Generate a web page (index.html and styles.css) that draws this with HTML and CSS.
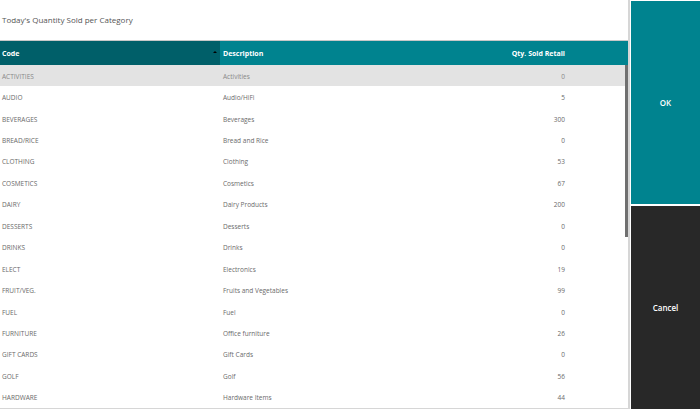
FILE: index.html
```html
<!DOCTYPE html>
<html>
<head>
<meta charset="utf-8">
<link rel="stylesheet" href="styles.css">
</head>
<body>
<div class="app">
  <div class="main">
    <div class="title">Today's Quantity Sold per Category</div>
    <div class="grid">
      <div class="head">
        <div class="c code">Code<span class="sort"></span></div>
        <div class="c desc">Description</div>
        <div class="c qty">Qty. Sold Retail</div>
      </div>
      <div class="body">
        <div class="row sel"><div class="c code">ACTIVITIES</div><div class="c desc">Activities</div><div class="c qty">0</div></div>
        <div class="row"><div class="c code">AUDIO</div><div class="c desc">Audio/HiFi</div><div class="c qty">5</div></div>
        <div class="row"><div class="c code">BEVERAGES</div><div class="c desc">Beverages</div><div class="c qty">300</div></div>
        <div class="row"><div class="c code">BREAD/RICE</div><div class="c desc">Bread and Rice</div><div class="c qty">0</div></div>
        <div class="row"><div class="c code">CLOTHING</div><div class="c desc">Clothing</div><div class="c qty">53</div></div>
        <div class="row"><div class="c code">COSMETICS</div><div class="c desc">Cosmetics</div><div class="c qty">67</div></div>
        <div class="row"><div class="c code">DAIRY</div><div class="c desc">Dairy Products</div><div class="c qty">200</div></div>
        <div class="row"><div class="c code">DESSERTS</div><div class="c desc">Desserts</div><div class="c qty">0</div></div>
        <div class="row"><div class="c code">DRINKS</div><div class="c desc">Drinks</div><div class="c qty">0</div></div>
        <div class="row"><div class="c code">ELECT</div><div class="c desc">Electronics</div><div class="c qty">19</div></div>
        <div class="row"><div class="c code">FRUIT/VEG.</div><div class="c desc">Fruits and Vegetables</div><div class="c qty">99</div></div>
        <div class="row"><div class="c code">FUEL</div><div class="c desc">Fuel</div><div class="c qty">0</div></div>
        <div class="row"><div class="c code">FURNITURE</div><div class="c desc">Office furniture</div><div class="c qty">26</div></div>
        <div class="row"><div class="c code">GIFT CARDS</div><div class="c desc">Gift Cards</div><div class="c qty">0</div></div>
        <div class="row"><div class="c code">GOLF</div><div class="c desc">Golf</div><div class="c qty">56</div></div>
        <div class="row"><div class="c code">HARDWARE</div><div class="c desc">Hardware Items</div><div class="c qty">44</div></div>
        <div class="scroll"></div>
      </div>
    </div>
  </div>
  <div class="side">
    <div class="btn ok">OK</div>
    <div class="btn cancel">Cancel</div>
  </div>
</div>
</body>
</html>
```
FILE: styles.css
```css
html, body {
  margin: 0;
  padding: 0;
  background: #fff;
}
body {
  font-family: "Open Sans", "Noto Sans", sans-serif;
  color: #666;
}
.app {
  display: flex;
  width: 700px;
  height: 409px;
  overflow: hidden;
}
.main {
  border-right: 2px solid #d6d6d6;
  border-bottom: 1px solid #d6d6d6;
  box-sizing: border-box;
  width: 630px;
  display: flex;
  flex-direction: column;
}
.title {
  height: 40px;
  box-sizing: border-box;
  padding: 14px 0 0 2px;
  font-size: 8px;
  color: #555;
}
.grid {
  border-top: 1px solid #c8c8c8;
  flex: 1;
  display: flex;
  flex-direction: column;
}
.head {
  display: flex;
  height: 24px;
  background: #00838f;
  color: #fff;
  font-weight: bold;
  font-size: 7px;
}
.head .c {
  display: flex;
  align-items: center;
}
.head .code {
  background: #005f69;
  position: relative;
}
.sort {
  position: absolute;
  right: 3px;
  top: 10px;
  width: 0;
  height: 0;
  border-left: 2px solid transparent;
  border-right: 2px solid transparent;
  border-bottom: 2px solid #000;
}
.c {
  box-sizing: border-box;
}
.code {
  width: 220px;
  padding-left: 2px;
}
.desc {
  width: 250px;
  padding-left: 3px;
}
.qty {
  width: 95px;
  justify-content: flex-end;
  text-align: right;
}
.body {
  position: relative;
  flex: 1;
}
.row {
  display: flex;
  align-items: center;
  height: 21.45px;
  padding-top: 1px;
  box-sizing: border-box;
  font-size: 6.5px;
  color: #6a6a6a;
}
.row.sel {
  background: #e3e3e3;
  color: #888;
}
.scroll {
  position: absolute;
  right: 0;
  top: 0;
  width: 3px;
  height: 172px;
  background: #707070;
}
.side {
  flex: 1;
  display: flex;
  flex-direction: column;
  padding-left: 1px;
  padding-top: 1px;
  gap: 2px;
}
.btn {
  flex: 1;
  display: flex;
  align-items: center;
  justify-content: center;
  color: #fff;
  font-size: 8px;
  font-weight: 600;
}
.ok {
  background: #00838f;
}
.cancel {
  background: #282828;
}
```
